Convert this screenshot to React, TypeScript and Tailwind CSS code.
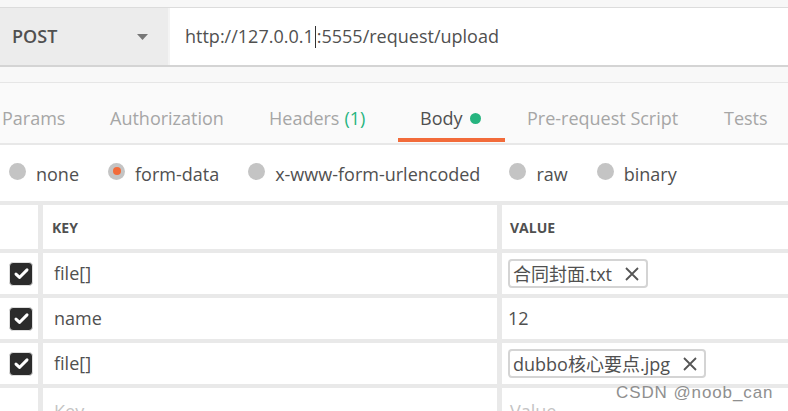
import React from 'react';

const font = { fontFamily: '"Open Sans", "Noto Sans CJK SC", sans-serif' };

const tabs = [
  { label: 'Params', w: 'w-[108px]' },
  { label: 'Authorization', w: 'w-[159px]' },
  { label: 'Headers', badge: '(1)', w: 'w-[151px]' },
  { label: 'Body', active: true, w: 'w-[107px]' },
  { label: 'Pre-request Script', w: 'w-[197px]' },
  { label: 'Tests', w: 'w-[90px]' },
];

const bodyTypes = ['none', 'form-data', 'x-www-form-urlencoded', 'raw', 'binary'];

const Checkbox = () => (
  <div className="w-[24px] h-[24px] rounded-[4px] border border-[#dedede] bg-[#2b2b2b] flex items-center justify-center">
    <svg width="17" height="17" viewBox="0 0 16 16" fill="none">
      <path d="M2.8 8.6l3.3 3.1L13.2 4.6" stroke="#fff" strokeWidth="2.8" strokeLinecap="round" strokeLinejoin="round" />
    </svg>
  </div>
);

const FileChip = ({ name }: { name: string }) => (
  <div className="inline-flex items-center h-[29px] border-2 border-[#d4d4d4] rounded-[4px] pl-[3px] pr-[6px] gap-[12px]">
    <span className="text-[18px] text-[#505050] leading-none">{name}</span>
    <svg width="16" height="16" viewBox="0 0 16 16">
      <path d="M2 2l12 12M14 2L2 14" stroke="#555" strokeWidth="1.8" />
    </svg>
  </div>
);

const rows = [
  { key: 'file[]', value: <FileChip name="合同封面.txt" /> },
  { key: 'name', value: <span>12</span> },
  { key: 'file[]', value: <FileChip name="dubbo核心要点.jpg" /> },
];

export default function App() {
  return (
    <div className="w-[788px] h-[411px] overflow-hidden bg-white relative" style={font}>
      {/* top strip */}
      <div className="h-[8px] bg-[#f7f7f7] border-b border-[#dcdcdc]" />

      {/* request bar */}
      <div className="flex h-[59px] border-b-2 border-[#d4d4d4]">
        <div className="w-[168px] bg-[#ececec] flex items-center justify-between pl-[12px] pr-[20px]">
          <span className="text-[18px] font-semibold text-[#505050]">POST</span>
          <svg width="11" height="6" viewBox="0 0 11 6">
            <path d="M0 0h11L5.5 6z" fill="#777" />
          </svg>
        </div>
        <div className="w-[2px] bg-[#f4f4f4]" />
        <div className="flex-1 flex items-center pl-[15px] text-[18px] text-[#505050]">
          http://127.0.0.1<span className="inline-block w-px h-[22px] bg-[#333] mx-[1px]" />:5555/request/upload
        </div>
      </div>

      {/* spacer band */}
      <div className="h-[16px] bg-[#f8f8f8] border-b border-[#e6e6e6]" />

      {/* tabs */}
      <div className="h-[62px] bg-[#fafafa] border-b-2 border-[#e8e8e8] flex ml-[-20px]">
        {tabs.map((t) => (
          <div
            key={t.label}
            className={`${t.w} shrink-0 pl-[22px] flex items-center gap-[5px] pt-[15px] border-b-4 mb-[1px] ${
              t.active ? 'border-[#f26b3a] text-[#505050]' : 'border-transparent text-[#a6a6a6]'
            } text-[18px]`}
          >
            <span>{t.label}</span>
            {t.badge && <span className="text-[#26b47f]">{t.badge}</span>}
            {t.active && <span className="w-[11px] h-[11px] rounded-full bg-[#26b47f] ml-[2px]" />}
          </div>
        ))}
      </div>

      {/* body type radios */}
      <div className="h-[56px] flex items-center pl-[9px] pt-[2px] gap-[29px]">
        {bodyTypes.map((b) => (
          <div key={b} className="flex items-center gap-[10px]">
            <span className="w-[17px] h-[17px] rounded-full bg-[#c4c4c4] flex items-center justify-center -mt-[6px]">
              {b === 'form-data' && <span className="w-[8px] h-[8px] rounded-full bg-[#f26b3a]" />}
            </span>
            <span className="text-[18px] text-[#505050]">{b}</span>
          </div>
        ))}
      </div>

      {/* key / value table */}
      <div className="grid grid-cols-[38px_454px_1fr] gap-x-[5px] gap-y-[4px] bg-[#e9e9e9] pt-[4px]">
        <div className="h-[44px] bg-white" />
        <div className="h-[44px] bg-white flex items-center pl-[9px] text-[14px] font-bold text-[#505050]">KEY</div>
        <div className="h-[44px] bg-white flex items-center pl-[8px] text-[14px] font-bold text-[#505050]">VALUE</div>

        {rows.map((r, i) => (
          <React.Fragment key={i}>
            <div className="h-[41px] bg-white flex items-center pl-[9px]">
              <Checkbox />
            </div>
            <div className="h-[41px] bg-white flex items-center pl-[11px] text-[18px] text-[#505050]">{r.key}</div>
            <div className="h-[41px] bg-white flex items-center pl-[6px] text-[18px] text-[#505050]">{r.value}</div>
          </React.Fragment>
        ))}

        <div className="h-[41px] bg-white" />
        <div className="h-[41px] bg-white pl-[11px] pt-[10px] text-[18px] text-[#c4c4c4]">Key</div>
        <div className="h-[41px] bg-white pl-[8px] pt-[10px] text-[18px] text-[#c4c4c4]">Value</div>
      </div>

      {/* watermark */}
      <div
        className="absolute left-[616px] top-[380px] text-[17px] text-[#8f8f8f] tracking-[0.9px]"
        style={{ fontFamily: '"Liberation Sans", Arial, sans-serif' }}
      >
        CSDN @noob_can
      </div>
    </div>
  );
}
